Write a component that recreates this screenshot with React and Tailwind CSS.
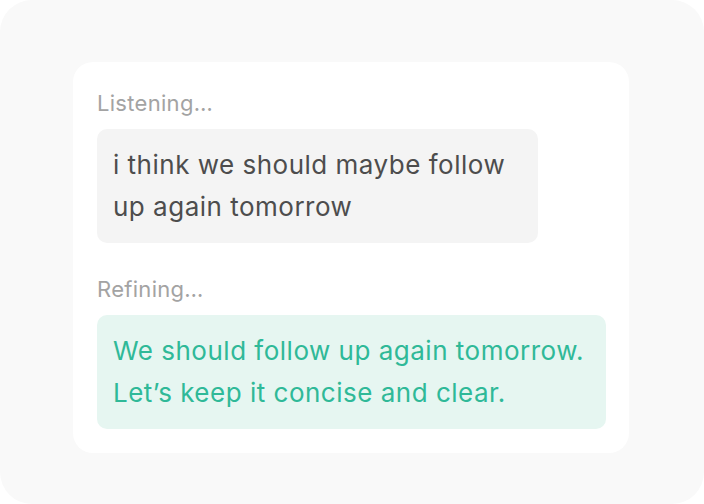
export default function App() {
  return (
    <div className="h-[504px] w-[704px] bg-white">
      <div
        className="h-full w-full rounded-[32px] bg-[#f9f9f9] pl-[73px] pt-[62px]"
        style={{ fontFamily: 'Inter, "Noto Sans", sans-serif' }}
      >
        <div className="flex w-[556px] flex-col rounded-[20px] bg-white px-6 pb-6 pt-[26px]">
          <p className="text-[22px] leading-[30px] tracking-[0.3px] text-[#a3a3a3]">Listening…</p>
          <div className="mt-[11px] w-[441px] rounded-[10px] bg-[#f4f4f4] px-4 py-[15px] text-[26px] leading-[42px] tracking-[0.5px] text-[#4d4d4d]">
            i think we should maybe follow up again tomorrow
          </div>
          <p className="mt-[31px] text-[22px] leading-[30px] tracking-[0.3px] text-[#a3a3a3]">Refining…</p>
          <div className="mt-[11px] w-[509px] rounded-[10px] bg-[#e6f6f1] px-4 py-[15px] text-[26px] leading-[42px] tracking-[0.5px] text-[#2fb998]">
            We should follow up again tomorrow. Let’s keep it concise and clear.
          </div>
        </div>
      </div>
    </div>
  )
}
